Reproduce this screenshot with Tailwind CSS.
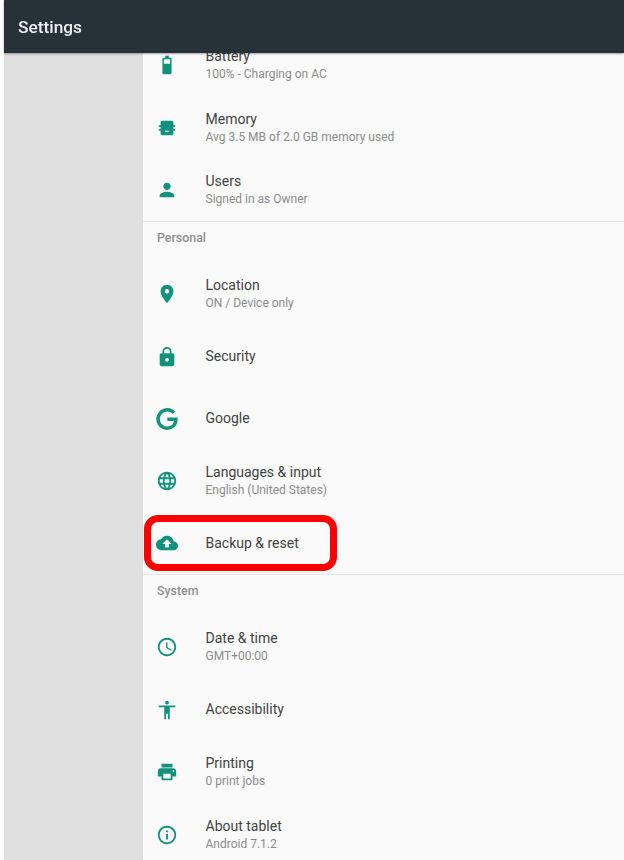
<!DOCTYPE html>
<html lang="en">
<head>
    <meta charset="UTF-8">
    <meta name="viewport" content="width=device-width, initial-scale=1.0">
    <title>Settings</title>
    <script src="https://cdn.jsdelivr.net/npm/@tailwindcss/browser@4"></script>
</head>
<body class="bg-white font-['Roboto',sans-serif]">
    <div class="w-[624px] h-[860px] pl-1 overflow-hidden flex flex-col blur-[0.6px]">
        <!-- app bar -->
        <header class="relative z-10 h-[53px] shrink-0 flex items-center pl-3.5 pt-0.5 bg-[#263238] shadow-[0_1px_2px_rgba(0,0,0,0.35)]">
            <h1 class="text-[17.3px] font-medium text-[#eceff1]">Settings</h1>
        </header>

        <div class="flex-1 flex min-h-0">
            <aside class="w-[139px] shrink-0 bg-[#e0e0e0]"></aside>

            <main class="flex-1 bg-[#fafafa] overflow-hidden">
                <div class="-mt-[19px]">
                    <!-- Device -->
                    <div class="h-[62.5px] flex items-center pl-[13px]">
                        <svg class="w-[22px] h-[22px] shrink-0 fill-[#12917f]" viewBox="0 0 24 24"><path d="M15.67 4H14V2h-4v2H8.33C7.6 4 7 4.6 7 5.33v15.33C7 21.4 7.6 22 8.33 22h7.33c.74 0 1.34-.6 1.34-1.33V5.33C17 4.6 16.4 4 15.67 4zM15.4 10.5H8.6V5.6h6.8v4.9z"/></svg>
                        <div class="ml-[27.5px]">
                            <div class="text-[14px] leading-[18px] text-[#424242]">Battery</div>
                            <div class="text-[12px] leading-[18px] text-[#8a8a8a]">100% - Charging on AC</div>
                        </div>
                    </div>
                    <div class="h-[62.5px] flex items-center pl-[13px]">
                        <svg class="w-[22px] h-[22px] shrink-0 fill-[#12917f]" viewBox="0 0 24 24"><path d="M21 11V9h-2V6c0-1.1-.9-2-2-2H7c-1.1 0-2 .9-2 2v3H3v2h2v2H3v2h2v3c0 1.1.9 2 2 2h10c1.1 0 2-.9 2-2v-3h2v-2h-2v-2h2zM14 16h-4v-1h4v1z"/></svg>
                        <div class="ml-[27.5px]">
                            <div class="text-[14px] leading-[18px] text-[#424242]">Memory</div>
                            <div class="text-[12px] leading-[18px] text-[#8a8a8a]">Avg 3.5 MB of 2.0 GB memory used</div>
                        </div>
                    </div>
                    <div class="h-[62.5px] flex items-center pl-[13px] border-b border-[#e6e6e6]">
                        <svg class="w-[22px] h-[22px] shrink-0 fill-[#12917f]" viewBox="0 0 24 24"><path d="M12 12c2.21 0 4-1.79 4-4s-1.79-4-4-4-4 1.79-4 4 1.79 4 4 4zm0 2c-2.67 0-8 1.34-8 4v2h16v-2c0-2.66-5.33-4-8-4z"/></svg>
                        <div class="ml-[27.5px]">
                            <div class="text-[14px] leading-[18px] text-[#424242]">Users</div>
                            <div class="text-[12px] leading-[18px] text-[#8a8a8a]">Signed in as Owner</div>
                        </div>
                    </div>

                    <!-- Personal -->
                    <div class="h-[41.5px] pt-[9.5px] pl-[14px] text-[12.4px] leading-[14px] font-medium text-[#8f8f8f]">Personal</div>
                    <div class="h-[62.5px] flex items-center pl-[13px]">
                        <svg class="w-[22px] h-[22px] shrink-0 fill-[#12917f]" viewBox="0 0 24 24"><path d="M12 2C8.13 2 5 5.13 5 9c0 5.25 7 13 7 13s7-7.75 7-13c0-3.87-3.13-7-7-7zm0 9.5c-1.38 0-2.5-1.12-2.5-2.5s1.12-2.5 2.5-2.5 2.5 1.12 2.5 2.5-1.12 2.5-2.5 2.5z"/></svg>
                        <div class="ml-[27.5px]">
                            <div class="text-[14px] leading-[18px] text-[#424242]">Location</div>
                            <div class="text-[12px] leading-[18px] text-[#8a8a8a]">ON / Device only</div>
                        </div>
                    </div>
                    <div class="h-[62px] flex items-center pl-[13px]">
                        <svg class="w-[22px] h-[22px] shrink-0 fill-[#12917f]" viewBox="0 0 24 24"><path d="M18 8h-1V6c0-2.76-2.24-5-5-5S7 3.24 7 6v2H6c-1.1 0-2 .9-2 2v10c0 1.1.9 2 2 2h12c1.1 0 2-.9 2-2V10c0-1.1-.9-2-2-2zm-6 9c-1.1 0-2-.9-2-2s.9-2 2-2 2 .9 2 2-.9 2-2 2zm3.1-9H8.9V6c0-1.71 1.39-3.1 3.1-3.1 1.71 0 3.1 1.39 3.1 3.1v2z"/></svg>
                        <div class="ml-[27.5px] text-[14px] text-[#424242]">Security</div>
                    </div>
                    <div class="h-[62px] flex items-center pl-[13px]">
                        <svg class="w-[22px] h-[22px] shrink-0 fill-none stroke-[#12917f]" stroke-width="3.8" viewBox="0 0 24 24"><path d="M19.6 5.2A10 10 0 1 0 12 22c5.6 0 9.6-3.6 9.6-9.8H12.4"/></svg>
                        <div class="ml-[27.5px] text-[14px] text-[#424242]">Google</div>
                    </div>
                    <div class="h-[62.5px] flex items-center pl-[13px]">
                        <svg class="w-[22px] h-[22px] shrink-0 fill-[#12917f]" viewBox="0 0 24 24"><path d="M11.99 2C6.47 2 2 6.48 2 12s4.47 10 9.99 10C17.52 22 22 17.52 22 12S17.52 2 11.99 2zm6.93 6h-2.95c-.32-1.25-.78-2.45-1.38-3.56 1.84.63 3.37 1.91 4.33 3.56zM12 4.04c.83 1.2 1.48 2.53 1.91 3.96h-3.82c.43-1.43 1.08-2.76 1.91-3.96zM4.26 14C4.1 13.36 4 12.69 4 12s.1-1.36.26-2h3.38c-.08.66-.14 1.32-.14 2 0 .68.06 1.34.14 2H4.26zm.82 2h2.95c.32 1.25.78 2.45 1.38 3.56-1.84-.63-3.37-1.9-4.33-3.56zm2.95-8H5.08c.96-1.66 2.49-2.93 4.33-3.56C8.81 5.55 8.35 6.75 8.03 8zM12 19.96c-.83-1.2-1.48-2.53-1.91-3.96h3.82c-.43 1.43-1.08 2.76-1.91 3.96zM14.34 14H9.66c-.09-.66-.16-1.32-.16-2 0-.68.07-1.35.16-2h4.68c.09.65.16 1.32.16 2 0 .68-.07 1.34-.16 2zm.25 5.56c.6-1.11 1.06-2.31 1.38-3.56h2.95c-.96 1.65-2.49 2.93-4.33 3.56zM16.36 14c.08-.66.14-1.32.14-2 0-.68-.06-1.34-.14-2h3.38c.16.64.26 1.31.26 2s-.1 1.36-.26 2h-3.38z"/></svg>
                        <div class="ml-[27.5px]">
                            <div class="text-[14px] leading-[18px] text-[#424242]">Languages &amp; input</div>
                            <div class="text-[12px] leading-[18px] text-[#8a8a8a]">English (United States)</div>
                        </div>
                    </div>
                    <div class="relative h-[62.5px] pt-px flex items-center pl-[13px] border-b border-[#e6e6e6]">
                        <svg class="w-[22px] h-[22px] shrink-0 fill-[#12917f]" viewBox="0 0 24 24"><path d="M19.35 10.04C18.67 6.59 15.64 4 12 4 9.11 4 6.6 5.64 5.35 8.04 2.34 8.36 0 10.91 0 14c0 3.31 2.69 6 6 6h13c2.76 0 5-2.24 5-5 0-2.64-2.05-4.78-4.65-4.96zM14 13v4h-4v-4H7l5-5 5 5h-3z"/></svg>
                        <div class="ml-[27.5px] text-[14px] text-[#424242]">Backup &amp; reset</div>
                        <!-- callout drawn over the row -->
                        <div class="absolute left-[1px] top-[3px] w-[193px] h-[56px] border-[7px] border-[#ff0000] rounded-[14px]"></div>
                    </div>

                    <!-- System -->
                    <div class="h-[41.5px] pt-[9.5px] pl-[14px] text-[12.4px] leading-[14px] font-medium text-[#8f8f8f]">System</div>
                    <div class="h-[62.5px] flex items-center pl-[13px]">
                        <svg class="w-[22px] h-[22px] shrink-0 fill-[#12917f]" viewBox="0 0 24 24"><path d="M11.99 2C6.47 2 2 6.48 2 12s4.47 10 9.99 10C17.52 22 22 17.52 22 12S17.52 2 11.99 2zM12 20c-4.42 0-8-3.58-8-8s3.58-8 8-8 8 3.58 8 8-3.58 8-8 8zm.5-13H11v6l5.25 3.15.75-1.23-4.5-2.67z"/></svg>
                        <div class="ml-[27.5px]">
                            <div class="text-[14px] leading-[18px] text-[#424242]">Date &amp; time</div>
                            <div class="text-[12px] leading-[18px] text-[#8a8a8a]">GMT+00:00</div>
                        </div>
                    </div>
                    <div class="h-[62.5px] flex items-center pl-[13px]">
                        <svg class="w-[22px] h-[22px] shrink-0 fill-[#12917f]" viewBox="0 0 24 24"><path d="M12 2c1.1 0 2 .9 2 2s-.9 2-2 2-2-.9-2-2 .9-2 2-2zm9 7h-6v13h-2v-6h-2v6H9V9H3V7h18v2z"/></svg>
                        <div class="ml-[27.5px] text-[14px] text-[#424242]">Accessibility</div>
                    </div>
                    <div class="h-[62.5px] flex items-center pl-[13px]">
                        <svg class="w-[22px] h-[22px] shrink-0 fill-[#12917f]" viewBox="0 0 24 24"><path d="M19 8H5c-1.66 0-3 1.34-3 3v6h4v4h12v-4h4v-6c0-1.66-1.34-3-3-3zm-3 11H8v-5h8v5zm3-7c-.55 0-1-.45-1-1s.45-1 1-1 1 .45 1 1-.45 1-1 1zm-1-9H6v4h12V3z"/></svg>
                        <div class="ml-[27.5px]">
                            <div class="text-[14px] leading-[18px] text-[#424242]">Printing</div>
                            <div class="text-[12px] leading-[18px] text-[#8a8a8a]">0 print jobs</div>
                        </div>
                    </div>
                    <div class="h-[62.5px] flex items-center pl-[13px]">
                        <svg class="w-[22px] h-[22px] shrink-0 fill-[#12917f]" viewBox="0 0 24 24"><path d="M11 17h2v-6h-2v6zm1-15C6.48 2 2 6.48 2 12s4.48 10 10 10 10-4.48 10-10S17.52 2 12 2zm0 18c-4.41 0-8-3.59-8-8s3.59-8 8-8 8 3.59 8 8-3.59 8-8 8zM11 9h2V7h-2v2z"/></svg>
                        <div class="ml-[27.5px]">
                            <div class="text-[14px] leading-[18px] text-[#424242]">About tablet</div>
                            <div class="text-[12px] leading-[18px] text-[#8a8a8a]">Android 7.1.2</div>
                        </div>
                    </div>
                </div>
            </main>
        </div>
    </div>
</body>
</html>
